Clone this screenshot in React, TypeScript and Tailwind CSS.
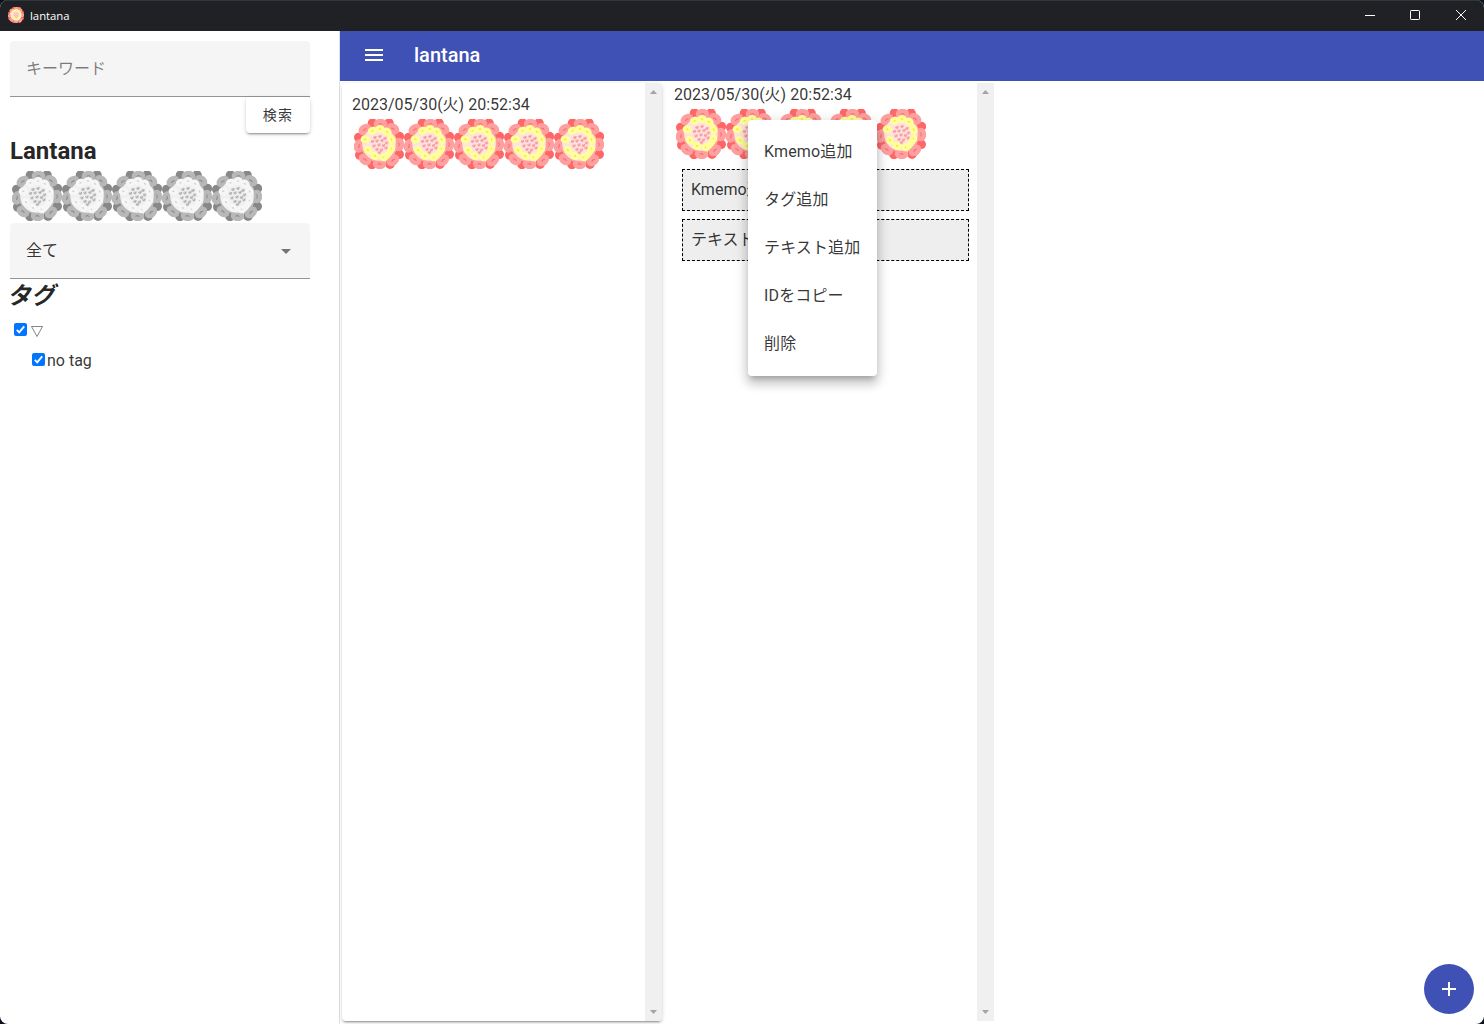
import React from "react";

type Palette = { back: string; outer: string; mark: string; base: string; inner: string; innerMark: string; dot: string; dotDark: string };

const COLOR: Palette = { back: "#ff6666", outer: "#ffa0a0", mark: "#ff6666", base: "#ffe2e2", inner: "#ffff99", innerMark: "#ffdd33", dot: "#ffb8b8", dotDark: "#f68c8c" };
const GRAY: Palette = { back: "#888888", outer: "#b8b8b8", mark: "#888888", base: "#f0f0f0", inner: "#f6f6f6", innerMark: "#d0d0d0", dot: "#d0d0d0", dotDark: "#a3a3a3" };

const BACK = [[18.5, 4.2], [35, 4.2], [45.3, 17.5], [45.2, 35.3], [36, 45.2], [18, 45.4], [5.8, 36], [4.8, 18.5]];
const OUTER = [[26.5, 5, 0], [10.8, 10.5, -35], [39, 9.8, 35], [45, 25.5, 90], [39, 41.3, -40], [25.5, 45, 5], [11, 40.5, 35], [5, 27, 100]];
const INNER = [[18.5, 11.8, -20], [26, 10, 0], [33, 12.8, 30], [37.6, 20.5, 70], [37.2, 30, 110], [30, 38.2, -20], [21, 37, 20], [14, 31.2, 45], [11.3, 20.3, 0]];
const DOTS = [[21, 18.5], [26, 17.5], [31, 19.5], [18.5, 22.5], [23, 22], [28, 21.5], [32.5, 24], [20, 27], [25, 26], [29.5, 26.5], [23, 30.5], [27.5, 31], [32, 29], [25.5, 33.5]];

function Flower({ p = COLOR, className = "size-[50px]" }: { p?: Palette; className?: string }) {
  return (
    <svg viewBox="0 0 50 50" className={`${className} block shrink-0`}>
      {BACK.map(([x, y], i) => <circle key={i} cx={x} cy={y} r="4.8" fill={p.back} />)}
      <circle cx="25" cy="25" r="18.5" fill={p.outer} />
      {OUTER.map(([x, y, a], i) => (
        <g key={i} transform={`translate(${x} ${y}) rotate(${a})`}>
          <ellipse rx="6.8" ry="5.2" fill={p.outer} />
          <path d="M-2 .4L0-.4L2 .4" stroke={p.mark} strokeWidth="1" fill="none" />
        </g>
      ))}
      <circle cx="25" cy="25" r="16.8" fill={p.base} />
      {INNER.map(([x, y, a], i) => (
        <g key={i} transform={`translate(${x} ${y}) rotate(${a})`}>
          <ellipse rx="4.7" ry="4" fill={p.inner} />
          <ellipse rx="1.3" ry=".7" fill={p.innerMark} />
        </g>
      ))}
      <path d="M36 33L33 37" stroke={p.inner} strokeWidth="6" strokeLinecap="round" />
      {DOTS.map(([x, y], i) => (
        <g key={i}>
          <circle cx={x} cy={y} r="1.8" fill={p.dot} />
          <path d={`M${x - 1.3} ${y - 0.4}l1.2 1.2l1.3-2.2`} stroke={p.dotDark} strokeWidth=".9" fill="none" />
        </g>
      ))}
    </svg>
  );
}

function Flowers({ p }: { p?: Palette }) {
  return <div className="flex h-[52px] pl-0.5 pt-px">{[0, 1, 2, 3, 4].map((i) => <Flower key={i} p={p} />)}</div>;
}

function Scrollbar() {
  return (
    <div className="flex w-[17px] shrink-0 flex-col items-center justify-between bg-[#f0f0f0] py-[7px]">
      <svg viewBox="0 0 7 4" className="h-1 w-[7px]"><path d="M0 4L3.5 0L7 4Z" fill="#a3a3a3" /></svg>
      <svg viewBox="0 0 7 4" className="h-1 w-[7px]"><path d="M0 0L3.5 4L7 0Z" fill="#a3a3a3" /></svg>
    </div>
  );
}

function Check() {
  return (
    <span className="flex size-[13px] shrink-0 items-center justify-center rounded-[2px] bg-[#0075ff]">
      <svg viewBox="0 0 13 13" className="size-[13px]"><path d="M2.8 6.8L5.2 9.3L10.2 3.3" stroke="#fff" strokeWidth="1.9" fill="none" /></svg>
    </span>
  );
}

const MENU = ["Kmemo追加", "タグ追加", "テキスト追加", "IDをコピー", "削除"];

export default function App() {
  return (
    <div className="h-[1024px] w-[1484px] bg-[#0b111c]">
      <div className="flex h-full flex-col overflow-hidden rounded-lg bg-white font-['Roboto','Noto_Sans_CJK_JP',sans-serif] text-base leading-5 font-normal text-black/80">
        <header className="flex h-[31px] shrink-0 items-center border-t border-[#30363d] bg-[#202124] pb-0.5 pl-2 text-white">
          <Flower className="size-4" />
          <span className="mt-0.5 ml-1.5 grow font-['Open_Sans','Noto_Sans',sans-serif] text-[11.3px] leading-4">lantana</span>
          <div className="flex">
            <span className="flex w-11 justify-center"><svg viewBox="0 0 10 10" className="size-2.5"><path d="M0 5.5H10" stroke="#fff" /></svg></span>
            <span className="flex w-[46px] justify-center"><svg viewBox="0 0 10 10" className="size-2.5"><rect x=".5" y=".5" width="9" height="9" rx=".7" stroke="#fff" fill="none" /></svg></span>
            <span className="flex w-[46px] justify-center"><svg viewBox="0 0 10 10" className="size-2.5"><path d="M0 0L10 10M10 0L0 10" stroke="#fff" /></svg></span>
          </div>
        </header>
        <div className="flex min-h-0 grow">
          <aside className="w-[340px] shrink-0 border-r border-[#e0e0e0] pl-2.5 pt-2.5">
            <div className="flex h-14 w-[300px] items-center rounded-t border-b border-[#949494] bg-[#f5f5f5] px-4 text-black/50">キーワード</div>
            <div className="flex w-[300px] justify-end">
              <button className="h-9 w-16 rounded text-sm font-normal tracking-[1.25px] shadow-[0_3px_1px_-2px_rgba(0,0,0,.2),0_2px_2px_0_rgba(0,0,0,.14),0_1px_5px_0_rgba(0,0,0,.12)]">検索</button>
            </div>
            <h2 className="mt-0.5 h-[35px] text-2xl leading-[32px] font-bold text-black/87">Lantana</h2>
            <Flowers p={GRAY} />
            <div className="mt-px flex h-14 w-[300px] items-center justify-between rounded-t border-b border-[#949494] bg-[#f5f5f5] pr-[19px] pl-4">
              <span>全て</span>
              <svg viewBox="0 0 10 5" className="mt-px h-[5px] w-2.5"><path d="M0 0H10L5 5Z" fill="#757575" /></svg>
            </div>
            <h2 className="h-[34px] text-2xl leading-[34px] font-bold text-black/87"><span className="-ml-px inline-block -skew-x-12">タグ</span></h2>
            <div className="mt-1.5 flex h-5 items-center pl-1"><Check /><svg viewBox="0 0 12 11" className="mt-1 ml-1 h-[11px] w-3"><path d="M.5 .5H11.5L6 10.5Z" stroke="#666" strokeWidth=".8" fill="none" /></svg></div>
            <div className="mt-2.5 flex h-5 items-center pl-[22px]"><Check /><span className="mt-[3px] ml-0.5">no tag</span></div>
          </aside>
          <div className="flex min-w-0 grow flex-col">
            <div className="flex h-[50px] shrink-0 items-center bg-[#3f51b5] pl-[25px] text-white">
              <svg viewBox="0 0 18 12" className="mb-0.5 h-3 w-[18px]"><path d="M0 1H18M0 6H18M0 11H18" stroke="#fff" strokeWidth="2" /></svg>
              <span className="mb-0.5 ml-[31px] text-xl leading-8 font-medium">lantana</span>
            </div>
            <main className="flex grow gap-0.5 pt-0.5 pb-[3px] pl-0.5">
              <section className="flex w-80 overflow-hidden rounded shadow-[0_3px_1px_-2px_rgba(0,0,0,.2),0_2px_2px_0_rgba(0,0,0,.14),0_1px_5px_0_rgba(0,0,0,.12)]">
                <div className="grow pl-2.5 pt-3">
                  <div className="h-[23px]">2023/05/30(火) 20:52:34</div>
                  <Flowers />
                </div>
                <Scrollbar />
              </section>
              <section className="relative flex w-[330px]">
                <div className="grow pl-2.5 pt-0.5">
                  <div className="h-[23px]">2023/05/30(火) 20:52:34</div>
                  <Flowers />
                  <div className="mr-2 ml-2 mt-[9px] h-[42px] border border-dashed border-black bg-[#eeeeee] px-2 pt-2.5">Kmemo追加</div>
                  <div className="mr-2 ml-2 mt-2 h-[42px] border border-dashed border-black bg-[#eeeeee] px-2 pt-2.5">テキスト追加</div>
                </div>
                <Scrollbar />
                <ul className="absolute top-[37px] left-[84px] h-64 w-[129px] rounded bg-white py-2 shadow-[0_5px_5px_-3px_rgba(0,0,0,.2),0_8px_10px_1px_rgba(0,0,0,.14),0_3px_14px_2px_rgba(0,0,0,.12)]">
                  {MENU.map((m) => <li key={m} className="flex h-12 items-center px-4 tracking-[.15px] whitespace-nowrap">{m}</li>)}
                </ul>
              </section>
            </main>
          </div>
        </div>
        <button className="fixed right-2.5 bottom-2.5 flex size-[50px] items-center justify-center rounded-full bg-[#3f51b5]">
          <svg viewBox="0 0 14 14" className="size-3.5"><path d="M7 0V14M0 7H14" stroke="#fff" strokeWidth="2" /></svg>
        </button>
      </div>
    </div>
  );
}
